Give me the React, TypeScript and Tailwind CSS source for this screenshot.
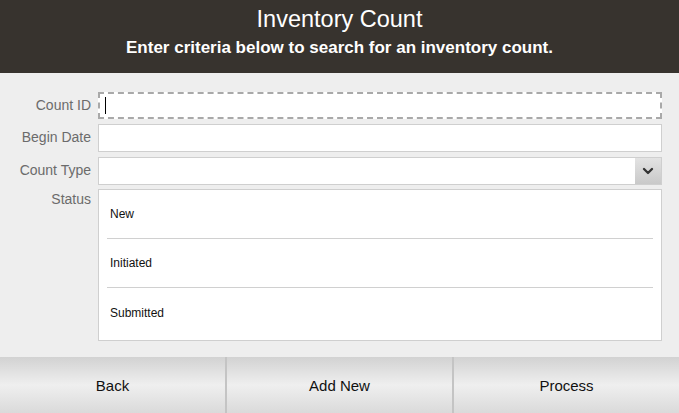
import { ChevronDown } from "lucide-react"

const statuses = ["New", "Initiated", "Submitted"]

function Label({ children, tight }: { children: string; tight?: boolean }) {
  return (
    <div
      className={`w-[92px] shrink-0 pr-px text-right text-[14px] text-[#6b6b6b] ${
        tight ? "leading-[18px]" : "leading-[27px]"
      }`}
    >
      {children}
    </div>
  )
}

export default function App() {
  return (
    <div
      className="flex h-[413px] w-[679px] flex-col bg-[#eeeeee]"
      style={{ fontFamily: '"Liberation Sans", Arial, sans-serif' }}
    >
      <header className="flex h-[73px] shrink-0 flex-col items-center bg-[#37332e] text-white">
        <h1 className="mt-[5px] text-[23.5px] leading-[28px]">Inventory Count</h1>
        <p className="mt-[5px] text-[17px] font-bold leading-[20px]">
          Enter criteria below to search for an inventory count.
        </p>
      </header>

      <main className="flex flex-1 flex-col gap-[5px] pt-[19px] pr-[17px]">
        <div className="flex gap-[6px]">
          <Label>Count ID</Label>
          <div className="flex h-[27px] flex-1 items-center border-2 border-dashed border-[#a9a9a9] bg-white pl-[5px]">
            <span className="h-[17px] w-px bg-black" />
          </div>
        </div>

        <div className="flex gap-[6px]">
          <Label>Begin Date</Label>
          <div className="h-[28px] flex-1 border border-[#cfcfcf] bg-white" />
        </div>

        <div className="flex gap-[6px]">
          <Label>Count Type</Label>
          <div className="flex h-[28px] flex-1 border border-[#cfcfcf] bg-white">
            <div className="flex-1" />
            <div className="flex w-[26px] items-center justify-center bg-gradient-to-b from-[#e3e3e3] to-[#c9c9c9]">
              <ChevronDown className="h-4 w-4 text-[#333333]" strokeWidth={3.5} />
            </div>
          </div>
        </div>

        <div className="flex gap-[6px]">
          <Label tight>Status</Label>
          <ul className="-mt-[1px] flex h-[152px] flex-1 flex-col border border-[#cfcfcf] bg-white px-[8px]">
            {statuses.map((s, i) => (
              <li
                key={s}
                className={`flex h-[49px] items-center pl-[3px] text-[12px] text-[#111111] ${
                  i < statuses.length - 1 ? "border-b border-[#d0d0d0]" : ""
                }`}
              >
                {s}
              </li>
            ))}
          </ul>
        </div>
      </main>

      <footer className="flex h-[56px] shrink-0">
        {["Back", "Add New", "Process"].map((b, i) => (
          <button
            key={b}
            className={`flex flex-1 items-center justify-center bg-gradient-to-b from-[#d2d2d2] via-[#efefef] to-[#dadada] pt-[2px] text-[15px] text-[#111111] ${
              i > 0 ? "border-l-2 border-[#c4c4c4]" : ""
            }`}
          >
            {b}
          </button>
        ))}
      </footer>
    </div>
  )
}
